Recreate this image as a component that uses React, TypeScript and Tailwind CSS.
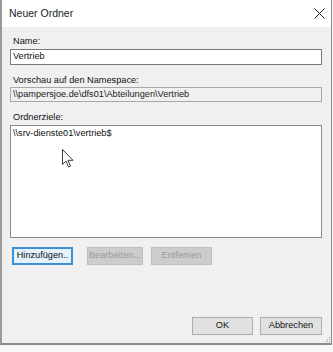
import React from "react";

// Windows-Dialog "Neuer Ordner" (DFS-Verwaltung)
const font = { fontFamily: '"Liberation Sans", Arial, sans-serif' };

function Cursor() {
  return (
    <svg width="12" height="19" viewBox="0 0 12 19" className="block">
      <path
        d="M0.5 0.5 L0.5 15.5 L4 12 L6.5 18 L8.5 17.2 L6 11.3 L11 11.3 Z"
        fill="#ffffff"
        stroke="#3a3a3a"
        strokeWidth="1"
        strokeLinejoin="round"
      />
    </svg>
  );
}

export default function App() {
  return (
    <div
      className="w-[333px] h-[352px] bg-[#f7f7f7] flex flex-col text-[9.2px] text-[#111]"
      style={font}
    >
      {/* FENSTER */}
      <div className="w-[332px] h-[345px] flex flex-col border-l-2 border-r border-b-2 border-[#8c8c8c] border-l-[#9a9a9a]">
        {/* TITELLEISTE */}
        <div className="h-[27px] bg-white flex items-center justify-between pl-[7px] pr-[6px] shrink-0">
          <span className="text-[10.5px] text-[#1a1a1a]">Neuer Ordner</span>
          <svg width="11" height="11" viewBox="0 0 11 11">
            <path d="M0.5 0.5 L10.5 10.5 M10.5 0.5 L0.5 10.5" stroke="#222" strokeWidth="1" />
          </svg>
        </div>

        {/* INHALT */}
        <div className="flex-1 bg-[#f0f0f0] flex flex-col pl-[8px] pr-[9px] pt-[8px] relative">
          <div className="pl-[3px] leading-[12px]">Name:</div>
          <div className="mt-[2px] h-[16px] bg-white border border-[#7a7a7a] flex items-center pl-[2px]">
            Vertrieb
          </div>

          <div className="mt-[9px] pl-[3px] leading-[12px]">Vorschau auf den Namespace:</div>
          <div className="mt-[1px] h-[15px] bg-[#f0f0f0] border border-[#a8a8a8] flex items-center pl-[2px] text-[#222]">
            {"\\\\pampersjoe.de\\dfs01\\Abteilungen\\Vertrieb"}
          </div>

          <div className="mt-[9px] pl-[3px] leading-[12px]">Ordnerziele:</div>
          <div className="mt-[2px] h-[113px] bg-white border border-[#8a8a8a] pl-[2px] pt-[1px] flex flex-col">
            <span>{"\\\\srv-dienste01\\vertrieb$"}</span>
            <div className="mt-[8px] ml-[49px]">
              <Cursor />
            </div>
          </div>

          {/* BUTTONS LISTE */}
          <div className="mt-[9px] flex items-center">
            <button className="ml-[2px] w-[61px] h-[18px] bg-[#e5f1fb] border-2 border-[#3c8fd6] text-[9.2px] text-[#111] leading-none">
              Hinzufügen..
            </button>
            <button className="ml-[14px] w-[56px] h-[18px] bg-[#cccccc] border border-[#bfbfbf] text-[9.2px] text-[#9a9a9a] leading-none">
              Bearbeiten...
            </button>
            <button className="ml-[8px] w-[61px] h-[18px] bg-[#cccccc] border border-[#bfbfbf] text-[9.2px] text-[#9a9a9a] leading-none">
              Entfernen
            </button>
          </div>

          {/* OK / ABBRECHEN */}
          <div className="mt-auto mb-[8px] flex justify-end items-center">
            <button className="w-[61px] h-[18px] bg-[#e1e1e1] border border-[#adadad] text-[9.2px] leading-none">
              OK
            </button>
            <button className="ml-[7px] w-[62px] h-[18px] bg-[#e1e1e1] border border-[#adadad] text-[9.2px] leading-none">
              Abbrechen
            </button>
          </div>

          {/* Größengriff */}
          <div className="absolute right-[1px] bottom-[1px] grid grid-cols-3 gap-[1px]">
            <span className="w-[1px] h-[1px]" />
            <span className="w-[1px] h-[1px]" />
            <span className="w-[1px] h-[1px] bg-[#a0a0a0]" />
            <span className="w-[1px] h-[1px]" />
            <span className="w-[1px] h-[1px] bg-[#a0a0a0]" />
            <span className="w-[1px] h-[1px] bg-[#a0a0a0]" />
            <span className="w-[1px] h-[1px] bg-[#a0a0a0]" />
            <span className="w-[1px] h-[1px] bg-[#a0a0a0]" />
            <span className="w-[1px] h-[1px] bg-[#a0a0a0]" />
          </div>
        </div>
      </div>
    </div>
  );
}
